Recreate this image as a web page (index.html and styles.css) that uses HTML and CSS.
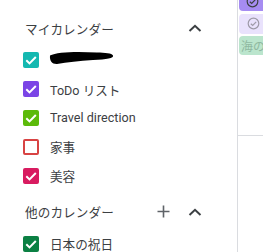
FILE: index.html
```html
<!DOCTYPE html>
<html lang="ja">
<head>
<meta charset="utf-8">
<link rel="stylesheet" href="styles.css">
</head>
<body>
<div class="app">
  <aside class="sidebar">
    <section class="section">
      <div class="sec-head">
        <span class="sec-title">マイカレンダー</span>
        <span class="icon-btn"><svg width="14" height="8" viewBox="0 0 14 8"><path d="M1.5 7 L7 1.8 L12.5 7" fill="none" stroke="#3c4043" stroke-width="2"/></svg></span>
      </div>
      <div class="row">
        <span class="cb c-teal"><svg viewBox="0 0 16 16"><path d="M3.3 8.3 L6.5 11.4 L12.8 5" class="tick"/></svg></span>
        <svg class="blob" width="66" height="14" viewBox="0 0 66 14"><path d="M1 4.5 C 8 0.5, 30 0.5, 48 1.5 C 56 1.8, 63 2.2, 64 4.5 C 65 7, 58 8.5, 44 9 C 30 9.5, 18 11.5, 8 13 C 3 13.2, 0.5 10, 1 4.5 Z" fill="#000"/></svg>
      </div>
      <div class="row">
        <span class="cb c-purple"><svg viewBox="0 0 16 16"><path d="M3.3 8.3 L6.5 11.4 L12.8 5" class="tick"/></svg></span>
        <span class="label">ToDo リスト</span>
      </div>
      <div class="row">
        <span class="cb c-green"><svg viewBox="0 0 16 16"><path d="M3.3 8.3 L6.5 11.4 L12.8 5" class="tick"/></svg></span>
        <span class="label">Travel direction</span>
      </div>
      <div class="row">
        <span class="cb c-empty"></span>
        <span class="label">家事</span>
      </div>
      <div class="row">
        <span class="cb c-cherry"><svg viewBox="0 0 16 16"><path d="M3.3 8.3 L6.5 11.4 L12.8 5" class="tick"/></svg></span>
        <span class="label">美容</span>
      </div>
    </section>
    <section class="section">
      <div class="sec-head">
        <span class="sec-title">他のカレンダー</span>
        <span class="icon-btn"><svg width="13" height="13" viewBox="0 0 13 13"><path d="M6.5 0.5 V12.5 M0.5 6.5 H12.5" fill="none" stroke="#5f6368" stroke-width="1.6"/></svg></span>
        <span class="icon-btn"><svg width="14" height="8" viewBox="0 0 14 8"><path d="M1.5 7 L7 1.8 L12.5 7" fill="none" stroke="#3c4043" stroke-width="2"/></svg></span>
      </div>
      <div class="row">
        <span class="cb c-basil"><svg viewBox="0 0 16 16"><path d="M3.3 8.3 L6.5 11.4 L12.8 5" class="tick"/></svg></span>
        <span class="label">日本の祝日</span>
      </div>
    </section>
  </aside>
  <main class="main">
    <div class="cell">
      <div class="chip chip-dark"><svg class="chip-ic" width="13" height="13" viewBox="0 0 13 13"><circle cx="6.5" cy="6.5" r="5.3" fill="none" stroke="#3c4043" stroke-width="1.2"/><path d="M3.8 6.7 L5.7 8.5 L9.2 4.8" fill="none" stroke="#3c4043" stroke-width="1.2"/></svg></div>
      <div class="chip chip-light"><svg class="chip-ic" width="13" height="13" viewBox="0 0 13 13"><circle cx="6.5" cy="6.5" r="5.3" fill="none" stroke="#9e9aa8" stroke-width="1.2"/><path d="M3.8 6.7 L5.7 8.5 L9.2 4.8" fill="none" stroke="#9e9aa8" stroke-width="1.2"/></svg><span class="chip-text">タスク</span></div>
      <div class="chip chip-green"><span class="chip-text">海の日</span></div>
    </div>
  </main>
</div>
</body>
</html>
```
FILE: styles.css
```css
html, body {
  margin: 0;
  padding: 0;
  background: #fff;
}
body {
  font-family: Roboto, "Noto Sans CJK JP", sans-serif;
  font-size: 12.6px;
  color: #3c4043;
  overflow: hidden;
  width: 263px;
  height: 252px;
}
.app {
  display: flex;
  height: 252px;
}
.sidebar {
  width: 237px;
  flex: none;
  border-right: 1px solid #dadce0;
  padding-top: 10px;
  box-sizing: content-box;
}
.section {
  padding-bottom: 3.6px;
}
.sec-head {
  display: flex;
  align-items: center;
  height: 36px;
  padding-left: 25px;
  padding-right: 27px;
}
.sec-title {
  flex: 1;
  color: #3c4043;
  font-size: 12.6px;
  letter-spacing: 0.1px;
}
.icon-btn {
  width: 31px;
  height: 30px;
  display: flex;
  align-items: center;
  justify-content: center;
}
.row {
  display: flex;
  align-items: center;
  height: 28.8px;
  padding-left: 23px;
  gap: 11px;
}
.cb {
  width: 16px;
  height: 16px;
  flex: none;
  border-radius: 2px;
  box-sizing: border-box;
  display: block;
}
.cb svg {
  width: 16px;
  height: 16px;
  display: block;
}
.tick {
  fill: none;
  stroke: #fff;
  stroke-width: 2;
}
.c-teal { background: #14b8b0; }
.c-purple { background: #7b44e6; }
.c-green { background: #5cba0a; }
.c-empty { border: 2px solid #d84343; background: #fff; }
.c-cherry { background: #d81b60; }
.c-basil { background: #0b8043; }
.label {
  white-space: nowrap;
  color: #3c4043;
}
.blob {
  margin-top: -5px;
  margin-left: -1px;
}
.main {
  flex: 1;
  overflow: hidden;
}
.cell {
  height: 136px;
  border-bottom: 1px solid #dadce0;
  box-sizing: border-box;
  padding-left: 1px;
  overflow: hidden;
}
.chip {
  height: 20px;
  border-radius: 4px 0 0 4px;
  display: flex;
  align-items: center;
  padding-left: 8px;
  gap: 3px;
  white-space: nowrap;
  margin-bottom: 2.5px;
}
.chip-dark {
  background: #a68cf2;
  margin-top: -9px;
  padding-left: 7px;
}
.chip-dark .chip-ic { margin-top: 0; }
.chip-light {
  background: #e9e2fc;
  color: #9e9aa8;
}
.chip-green {
  background: #bbe5cd;
  color: #8fb8a0;
  margin-top: 0.5px;
  padding-left: 2px;
  height: 19px;
}
.chip-text {
  font-size: 12px;
}
.chip-ic { flex: none; }
```
